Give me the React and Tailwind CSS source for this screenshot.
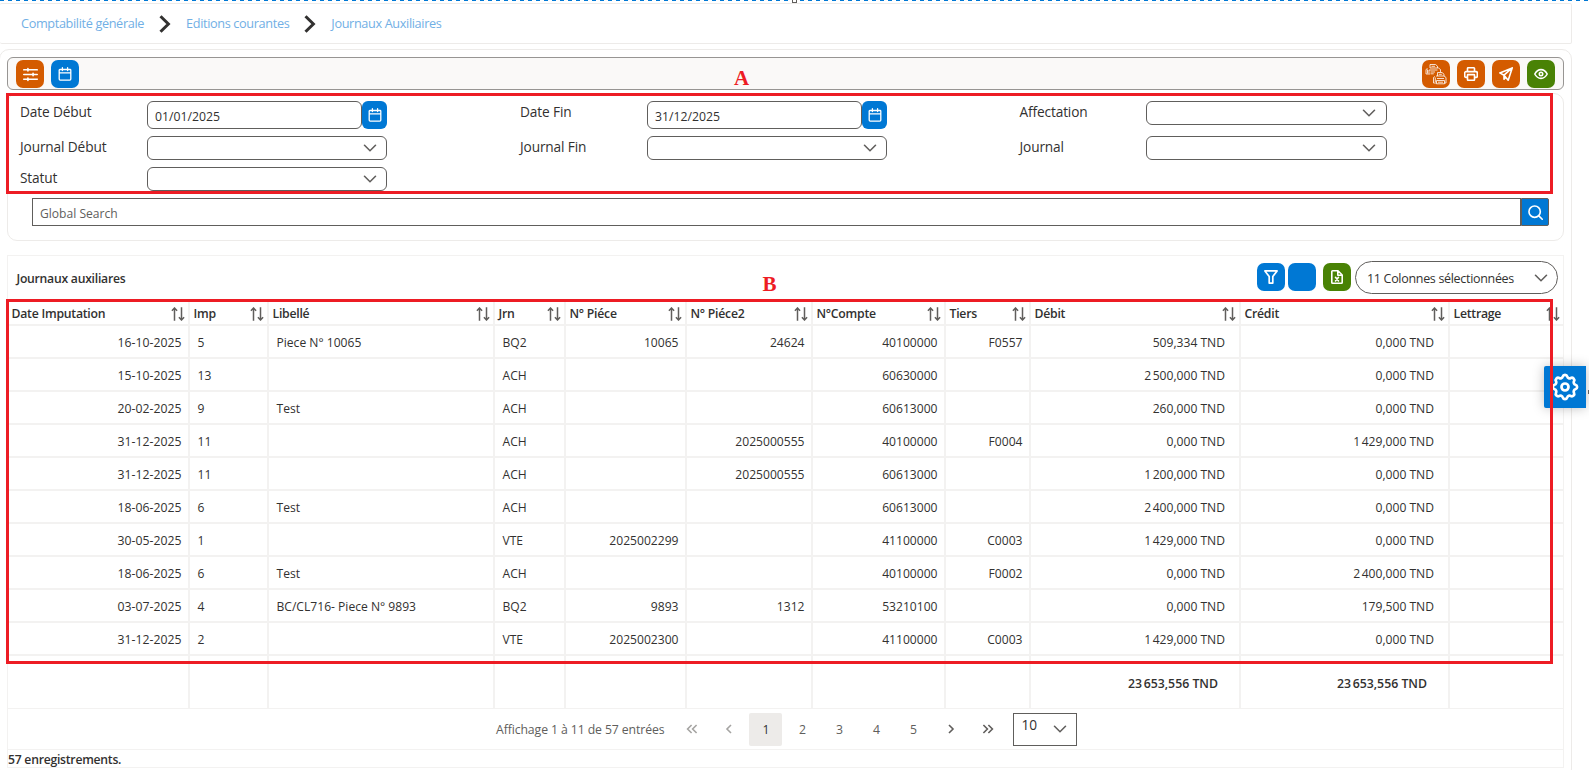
import clsx from 'clsx';

const columns = [
  { key: 'date', label: 'Date Imputation', align: 'date' },
  { key: 'imp', label: 'Imp' },
  { key: 'libelle', label: 'Libellé' },
  { key: 'jrn', label: 'Jrn' },
  { key: 'piece', label: 'N° Piéce', align: 'right' },
  { key: 'piece2', label: 'N° Piéce2', align: 'right' },
  { key: 'compte', label: 'N°Compte', align: 'right' },
  { key: 'tiers', label: 'Tiers', align: 'right' },
  { key: 'debit', label: 'Débit', align: 'amount' },
  { key: 'credit', label: 'Crédit', align: 'amount' },
  { key: 'lettrage', label: 'Lettrage' },
];

const rows = [
  { date: '16-10-2025', imp: '5', libelle: 'Piece N° 10065', jrn: 'BQ2', piece: '10065', piece2: '24624', compte: '40100000', tiers: 'F0557', debit: '509,334 TND', credit: '0,000 TND' },
  { date: '15-10-2025', imp: '13', jrn: 'ACH', compte: '60630000', debit: '2\u202f500,000 TND', credit: '0,000 TND' },
  { date: '20-02-2025', imp: '9', libelle: 'Test', jrn: 'ACH', compte: '60613000', debit: '260,000 TND', credit: '0,000 TND' },
  { date: '31-12-2025', imp: '11', jrn: 'ACH', piece2: '2025000555', compte: '40100000', tiers: 'F0004', debit: '0,000 TND', credit: '1\u202f429,000 TND' },
  { date: '31-12-2025', imp: '11', jrn: 'ACH', piece2: '2025000555', compte: '60613000', debit: '1\u202f200,000 TND', credit: '0,000 TND' },
  { date: '18-06-2025', imp: '6', libelle: 'Test', jrn: 'ACH', compte: '60613000', debit: '2\u202f400,000 TND', credit: '0,000 TND' },
  { date: '30-05-2025', imp: '1', jrn: 'VTE', piece: '2025002299', compte: '41100000', tiers: 'C0003', debit: '1\u202f429,000 TND', credit: '0,000 TND' },
  { date: '18-06-2025', imp: '6', libelle: 'Test', jrn: 'ACH', compte: '40100000', tiers: 'F0002', debit: '0,000 TND', credit: '2\u202f400,000 TND' },
  { date: '03-07-2025', imp: '4', libelle: 'BC/CL716- Piece N° 9893', jrn: 'BQ2', piece: '9893', piece2: '1312', compte: '53210100', debit: '0,000 TND', credit: '179,500 TND' },
  { date: '31-12-2025', imp: '2', jrn: 'VTE', piece: '2025002300', compte: '41100000', tiers: 'C0003', debit: '1\u202f429,000 TND', credit: '0,000 TND' },
];

const totals = { debit: '23\u202f653,556 TND', credit: '23\u202f653,556 TND' };

const GRID = 'grid grid-cols-[182px_79px_226px_71px_121px_126px_133px_85px_210px_209px_113px]';

/* ---------- icons ---------- */

function Icon({ size = 14, sw = 1.6, className, children }) {
  return (
    <svg
      width={size}
      height={size}
      viewBox="0 0 14 14"
      fill="none"
      stroke="currentColor"
      strokeWidth={sw}
      strokeLinecap="round"
      strokeLinejoin="round"
      className={clsx('shrink-0', className)}
    >
      {children}
    </svg>
  );
}

const SlidersIcon = () => (
  <Icon size={15} sw={1.5}>
    <path d="M.7 2.600H13.300M.7 7H13.300M.7 11.400H13.300M4.600 1.500v2.200M9.400 5.900v2.200M4.600 10.300v2.200" />
  </Icon>
);

const CalendarIcon = () => (
  <Icon size={14} sw={1.3}>
    <path d="M1.900 2.500h10.200a.7.7 0 0 1 .7.7v8.900a1 1 0 0 1-1 1H2.200a1 1 0 0 1-1-1V3.200a.7.7 0 0 1 .7-.7zM1.200 5.800h11.600M4.400.7v2.800M9.600.7v2.800" />
  </Icon>
);

const PrintIcon = () => (
  <Icon size={14} sw={1.6}>
    <path d="M3.500 4.600V1.400a.6.6 0 0 1 .6-.6h5.800a.6.6 0 0 1 .6.6v3.200M3.500 10.400H2a1.300 1.300 0 0 1-1.300-1.300V5.900A1.300 1.300 0 0 1 2 4.600h10a1.300 1.300 0 0 1 1.300 1.300v3.200a1.300 1.300 0 0 1-1.300 1.300h-1.500M3.900 7.600h6.200a.4.4 0 0 1 .4.4v4.800a.4.4 0 0 1-.4.4H3.900a.4.4 0 0 1-.4-.4V8a.4.4 0 0 1 .4-.4z" />
  </Icon>
);

const PrintAllIcon = () => (
  <svg width="22" height="22" viewBox="0 0 22 22" fill="none" stroke="currentColor" strokeWidth="0.8" strokeLinejoin="round">
    <path d="M5 5V1.500h5.500L12.500 3.200V5M2.500 5.500 1 6.500V11h4M5 5h8.500l2 1.500V9M2.500 6.500v4M4 7h8.500M4 7v3.500M5.500 9H10M5.500 10.800h3.200M6.500 3.300h3.500" />
    <path d="M12.500 13V9.500H17L19 11.200V13M10 13.500 8.500 14.500V20h3M11 13h8l2 1.500V20h-1.500M10.300 14.500V19M12 15.500h7M11.500 17.500h8v3.300h-8zM13 19.200h5M13.800 11.300h3" />
  </svg>
);

const SendIcon = () => (
  <Icon size={14} sw={1.6}>
    <path d="M13.200.9.8 5.900l4.200 2.300 4.200 5zM13.200.9 5 8.200v4.100l1.800-2" />
  </Icon>
);

const EyeIcon = () => (
  <Icon size={14} sw={1.6}>
    <path d="M.8 7C2.300 4.100 4.500 2.600 7 2.600S11.700 4.100 13.200 7C11.700 9.900 9.500 11.400 7 11.400S2.300 9.900.8 7z" />
    <circle cx="7" cy="7" r="1.700" />
  </Icon>
);

const SearchIcon = () => (
  <Icon size={15} sw={1.5}>
    <circle cx="6.200" cy="6.200" r="5.300" />
    <path d="M10.100 10.100l3.200 3.200" />
  </Icon>
);

const FilterIcon = () => (
  <Icon size={14} sw={1.7}>
    <path d="M.9.9h12.200L8.800 6.600v6.500H5.200V6.600z" />
  </Icon>
);

const ExcelIcon = () => (
  <Icon size={14} sw={1.6}>
    <path d="M2.600 13.200a.8.8 0 0 1-.8-.8V1.600a.8.8 0 0 1 .8-.8h5.400l4.200 4.200v7.400a.8.8 0 0 1-.8.8zM7.800 1v4.200H12M5.500 7.300l3 3.700M8.500 7.300l-3 3.700" />
  </Icon>
);

const SortIcon = () => (
  <svg width="14" height="14" viewBox="0 0 14 14" fill="none" stroke="#605e5c" strokeWidth="1.5" className="-mt-px shrink-0">
    <path d="M3.500 13.800V1M.9 3.700 3.500 1l2.600 2.700M10.500.2V13M7.900 10.300l2.600 2.700 2.600-2.700" />
  </svg>
);

const ChevronDown = () => (
  <svg width="14" height="14" viewBox="0 0 14 14" fill="none" stroke="#605e5c" strokeWidth="1.6" strokeLinecap="round" className="shrink-0">
    <path d="M1.500 4.300 7 9.700l5.500-5.400" />
  </svg>
);

const CrumbChevron = () => (
  <svg width="12" height="18" viewBox="0 0 12 18" fill="none" stroke="#323130" strokeWidth="3" className="shrink-0">
    <path d="M1.500 1.200 9.400 9l-7.900 7.800" />
  </svg>
);

const GearIcon = () => (
  <svg width="28" height="28" viewBox="0 0 28 28" fill="none" stroke="white" strokeWidth="2.700" strokeLinejoin="round">
    <path d="M11.700 3.600a2.400 2.400 0 0 1 4.600 0 2.400 2.400 0 0 0 3.500 1.400 2.400 2.400 0 0 1 3.200 3.200 2.400 2.400 0 0 0 1.400 3.500 2.400 2.400 0 0 1 0 4.600 2.400 2.400 0 0 0-1.400 3.500 2.400 2.400 0 0 1-3.200 3.200 2.400 2.400 0 0 0-3.500 1.400 2.400 2.400 0 0 1-4.600 0A2.400 2.400 0 0 0 8.200 23 2.400 2.400 0 0 1 5 19.800 2.400 2.400 0 0 0 3.600 16.300a2.400 2.400 0 0 1 0-4.600A2.400 2.400 0 0 0 5 8.200 2.400 2.400 0 0 1 8.200 5a2.400 2.400 0 0 0 3.500-1.400z" />
    <circle cx="14" cy="14" r="3.500" />
  </svg>
);

/* ---------- small pieces ---------- */

function IconButton({ color, className, children }) {
  return (
    <button
      className={clsx(
        'flex h-7 w-7 shrink-0 items-center justify-center rounded-[7px] text-white',
        color === 'orange' && 'bg-[#d45b00]',
        color === 'blue' && 'bg-[#0078d4]',
        color === 'green' && 'bg-[#498205]',
        className
      )}
    >
      {children}
    </button>
  );
}

function Label({ children }) {
  return <span className="text-[13.7px] leading-[21px] tracking-[-0.01em]">{children}</span>;
}

function DateField({ value }) {
  return (
    <div className="flex h-7 w-60">
      <div className="flex h-7 w-[215px] items-center rounded-[6px] border border-[#605e5c] px-[7px] pt-[4px] text-[12.25px]">
        {value}
      </div>
      <div className="flex h-7 w-[25px] items-center justify-center rounded-[6px] bg-[#0078d4] text-white">
        <CalendarIcon />
      </div>
    </div>
  );
}

function SelectField({ className = 'w-60 pr-[9px]' }) {
  return (
    <div className={clsx('flex h-6 items-center justify-end rounded-[6px] border border-[#605e5c]', className)}>
      <ChevronDown />
    </div>
  );
}

function PageArrow({ d, muted, className }) {
  return (
    <span className={clsx('flex w-[37px] justify-center', muted ? 'text-[#a5a4a2]' : 'text-[#605e5c]', className)}>
      <svg width="12" height="12" viewBox="0 0 12 12" fill="none" stroke="currentColor" strokeWidth="1.6">
        <path d={d} />
      </svg>
    </span>
  );
}

function TableHeader() {
  return (
    <div className={clsx(GRID, 'h-[27px] border-b-2 border-[#f3f2f1]')}>
      {columns.map(col => (
        <div
          key={col.key}
          className="flex items-center justify-between border-r-2 border-[#f3f2f1] pt-[5px] pr-[3.5px] pl-[3.5px] text-[12.25px] font-semibold tracking-[-0.02em] last:border-r-0"
        >
          {col.label}
          <SortIcon />
        </div>
      ))}
    </div>
  );
}

function TableRow({ row }) {
  return (
    <div className={clsx(GRID, 'h-[33px] border-b-2 border-[#f3f2f1]')}>
      {columns.map(col => (
        <div
          key={col.key}
          className={clsx(
            'flex items-center border-r-2 border-[#f3f2f1] pt-[4px] whitespace-nowrap last:border-r-0',
            col.align === 'date' ? 'justify-end pr-[6.5px] text-[12.25px]' : 'text-[12.1px]',
            !col.align && 'pl-[7.5px]',
            col.align === 'right' && 'justify-end pr-[6.5px]',
            col.align === 'amount' && 'justify-end pr-[14px]'
          )}
        >
          {row[col.key]}
        </div>
      ))}
    </div>
  );
}

/* ---------- page ---------- */

export default function App() {
  return (
    <div className="relative h-[770px] w-[1589px] overflow-hidden bg-white font-['Open_Sans','Noto_Sans',sans-serif] text-[#323130]">
      <div className="h-px bg-[repeating-linear-gradient(90deg,#0078d4_0_4px,transparent_4px_8px)]" />

      {/* Breadcrumb */}
      <nav className="mt-[2px] flex h-[41px] w-[1572px] items-center gap-[15px] rounded-[2px] border border-l-0 border-[#edebe9] pl-[21px] text-[12.7px] tracking-[-0.028em] text-[#71afe5]">
        <span className="pt-px">Comptabilité générale</span>
        <CrumbChevron />
        <span className="pt-px">Editions courantes</span>
        <CrumbChevron />
        <span className="pt-px">Journaux Auxiliaires</span>
      </nav>

      <main className="-ml-px mt-[5px] h-[730px] w-[1573px] rounded-[10px] border border-[#edebe9] px-[7px] pt-[7px]">
        {/* Toolbar */}
        <div className="flex h-[33px] items-center justify-between rounded-[6px] border border-[#979593] bg-[#faf9f8] pt-px pr-2 pl-2">
          <div className="flex gap-[7px]">
            <IconButton color="orange"><SlidersIcon /></IconButton>
            <IconButton color="blue"><CalendarIcon /></IconButton>
          </div>
          <div className="flex gap-[7px]">
            <IconButton color="orange"><PrintAllIcon /></IconButton>
            <IconButton color="orange"><PrintIcon /></IconButton>
            <IconButton color="orange"><SendIcon /></IconButton>
            <IconButton color="green"><EyeIcon /></IconButton>
          </div>
        </div>

        {/* Criteria */}
        <section className="mt-[3px] h-[148px] rounded-[10px] border border-[#edebe9] pl-3">
          <div className="grid grid-cols-[127px_373px_127px_372.5px_126.5px_241px] grid-rows-[35px_31px_31px] pt-[7px]">
            <Label>Date Début</Label>
            <DateField value="01/01/2025" />
            <Label>Date Fin</Label>
            <DateField value="31/12/2025" />
            <Label>Affectation</Label>
            <SelectField className="w-[241px] pr-[10px]" />
            <Label>Journal Début</Label>
            <SelectField />
            <Label>Journal Fin</Label>
            <SelectField />
            <Label>Journal</Label>
            <SelectField className="w-[241px] pr-[10px]" />
            <Label>Statut</Label>
            <SelectField />
          </div>
          <div className="ml-3 flex w-[1517px]">
            <div className="flex h-7 flex-1 items-center border border-[#605e5c] pt-[4px] pl-[7px] text-[12.1px] text-[#605e5c]">
              Global Search
            </div>
            <div className="flex h-7 w-[28px] items-center justify-center rounded-r-[2px] border border-[#605e5c] bg-[#0078d4] text-white">
              <SearchIcon />
            </div>
          </div>
        </section>

        {/* Entries */}
        <section className="mt-[14px] border border-[#f3f2f1]">
          <div className="flex h-[43px] items-start pt-[5px] pr-[5px] pl-[8.5px]">
            <h2 className="mr-auto pt-[2px] text-[12.2px] leading-[32px] font-semibold tracking-[-0.02em]">Journaux auxiliares</h2>
            <IconButton color="blue" className="mt-[2px]"><FilterIcon /></IconButton>
            <IconButton color="blue" className="mt-[2px] ml-[3px]" />
            <IconButton color="green" className="mt-[2px] ml-[7px]"><ExcelIcon /></IconButton>
            <div className="ml-1 flex h-[33px] w-[203px] items-center justify-between rounded-full border border-[#605e5c] pr-[9px] pl-[11px] text-[12.5px] tracking-[-0.025em]">
              <span className="pt-[3px]">11 Colonnes sélectionnées</span>
              <ChevronDown />
            </div>
          </div>

          <TableHeader />
          {rows.map((row, i) => (
            <TableRow key={i} row={row} />
          ))}

          <div className={clsx(GRID, 'h-[53px] border-b border-[#f3f2f1]')}>
            {columns.map(col => (
              <div
                key={col.key}
                className="flex items-center justify-end border-r-2 border-[#f3f2f1] pt-[4px] pr-[21px] text-[12.3px] font-semibold last:border-r-0"
              >
                {totals[col.key]}
              </div>
            ))}
          </div>

          {/* Paginator */}
          <div className="flex h-[41px] items-center border-b border-[#f3f2f1] pl-[488px] text-[12.25px] text-[#605e5c]">
            <span className="mr-[8px] w-[169px] pt-[2px] tracking-[-0.008em] whitespace-nowrap">Affichage 1 à 11 de 57 entrées</span>
            <PageArrow muted d="M5.600 2 1.600 6l4 4M10.600 2l-4 4 4 4" />
            <PageArrow muted d="M8 2 4 6l4 4" />
            <span className="ml-[2px] flex h-[33px] w-[33px] items-center justify-center rounded-[2px] bg-[#edebe9] pt-[2px] pl-px text-[#323130]">1</span>
            <span className="flex w-[37px] justify-center pt-[2px] pl-1">2</span>
            <span className="flex w-[37px] justify-center pt-[2px] pl-1">3</span>
            <span className="flex w-[37px] justify-center pt-[2px] pl-1">4</span>
            <span className="flex w-[37px] justify-center pt-[2px] pl-1">5</span>
            <PageArrow className="ml-[2px]" d="M4 2l4 4-4 4" />
            <PageArrow d="M1.400 2l4 4-4 4M6.400 2l4 4-4 4" />
            <div className="ml-[7px] flex h-[33px] w-[64px] justify-between border border-[#605e5c] pt-px pr-[9px] pl-[7.5px] text-[13.7px] leading-[20px] text-[#323130]">
              10
              <span className="pt-[7px]"><ChevronDown /></span>
            </div>
          </div>
          <div className="h-[17px] pt-px text-[12.2px] leading-[18px] font-semibold tracking-[-0.02em]">57 enregistrements.</div>
        </section>
      </main>

      {/* Settings handle */}
      <button className="absolute top-[366px] left-[1544px] flex h-[42px] w-[42px] items-center justify-center rounded-l-[2px] bg-[#0078d4] shadow-[0_0_12px_rgba(0,0,0,0.25)]">
        <GearIcon />
      </button>

      {/* Callouts */}
      <div className="absolute top-[93px] left-[6px] h-[101px] w-[1547px] border-3 border-[#ed1c24]" />
      <div className="absolute top-[299px] left-[6px] h-[365px] w-[1547px] border-3 border-[#ed1c24]" />
      <span className="absolute top-[66px] left-[734px] font-['Liberation_Serif',serif] text-[21px] leading-[24px] font-bold text-[#ed1c24]">A</span>
      <span className="absolute top-[272px] left-[762.5px] font-['Liberation_Serif',serif] text-[21px] leading-[24px] font-bold text-[#ed1c24]">B</span>

      {/* Selection grips */}
      <div className="absolute -top-px left-[792px] h-1 w-[5px] border border-[#605e5c] bg-white" />
      <div className="absolute top-[390px] left-[1588px] h-1 w-1 bg-[#605e5c]" />
    </div>
  );
}
